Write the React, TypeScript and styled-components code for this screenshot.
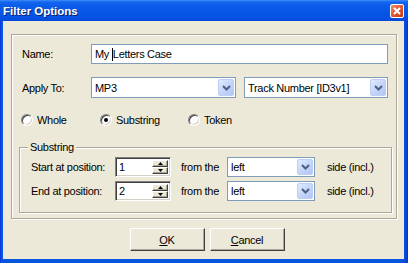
import React from 'react';
import styled, { createGlobalStyle } from 'styled-components';

const Global = createGlobalStyle`
  html, body { margin: 0; padding: 0; background: #fff; }
  body { font-family: "Liberation Sans", Arial, sans-serif; font-size: 11px; color: #000; letter-spacing: -0.3px; }
  * { box-sizing: border-box; }
`;

const Window = styled.div`
  width: 408px;
  height: 263px;
  display: flex;
  flex-direction: column;
  background: linear-gradient(to right, #0831d9 0px, #0b5ae6 2px, #0855dd 4px, #0855dd 403px, #0a4fd8 405px, #0831d9 408px);
  overflow: hidden;
`;

const TitleBar = styled.div`
  height: 21px;
  flex: none;
  display: flex;
  align-items: center;
  justify-content: space-between;
  padding: 0 4px 0 3px;
  background: linear-gradient(to bottom, #3c8ef8 0px, #1566ee 2px, #0a5ce9 6px, #0656e6 12px, #0452e2 18px, #0348d8 21px);
`;

const Title = styled.span`
  font-family: "Liberation Sans", Arial, sans-serif;
  font-weight: bold;
  font-size: 11.5px;
  color: #fff;
  text-shadow: 1px 1px 0 #0a1d6e;
  letter-spacing: 0;
`;

const CloseButton = styled.div`
  width: 14px;
  height: 14px;
  border: 1px solid #fff;
  border-radius: 2px;
  background: linear-gradient(135deg, #f0906f 0%, #e25b35 45%, #c93a12 100%);
  display: flex;
  align-items: center;
  justify-content: center;
`;

const Body = styled.div`
  flex: 1;
  margin: 0 4px 4px 3px;
  background: #ece9d8;
  padding: 13px 0 0 8px;
  display: flex;
  flex-direction: column;
`;

const Frame = styled.div`
  width: 386px;
  height: 185px;
  border: 1px solid #aca899;
  box-shadow: inset 1px 1px 0 #fff, 1px 1px 0 #fff;
  padding: 9px 0 0 0;
  display: flex;
  flex-direction: column;
`;

const Row = styled.div<{ $top?: number; $left?: number; $h?: number }>`
  display: flex;
  align-items: center;
  height: ${(p) => p.$h ?? 20}px;
  margin-top: ${(p) => p.$top ?? 0}px;
  margin-left: ${(p) => p.$left ?? 0}px;
`;

const Label = styled.span<{ $w?: number; $ml?: number }>`
  width: ${(p) => (p.$w ? `${p.$w}px` : 'auto')};
  margin-left: ${(p) => p.$ml ?? 0}px;
  flex: none;
  white-space: nowrap;
`;

const TextBox = styled.div<{ $w: number }>`
  width: ${(p) => p.$w}px;
  height: 20px;
  border: 1px solid #7f9db9;
  background: #fff;
  padding-left: 3px;
  display: flex;
  align-items: center;
  white-space: pre;
`;

const Caret = styled.span`
  display: inline-block;
  width: 1px;
  height: 13px;
  background: #000;
`;

const Combo = styled.div<{ $w: number; $h?: number; $ml?: number }>`
  width: ${(p) => p.$w}px;
  height: ${(p) => p.$h ?? 21}px;
  margin-left: ${(p) => p.$ml ?? 0}px;
  border: 1px solid #7f9db9;
  background: #fff;
  padding: 1px 1px 1px 3px;
  display: flex;
  align-items: center;
  justify-content: space-between;
  white-space: nowrap;
`;

const DropButton = styled.div`
  width: 16px;
  height: 100%;
  border: 1px solid #bccdf6;
  border-radius: 2px;
  background: linear-gradient(135deg, #e2eafd 0%, #c6d6fa 50%, #b2c6f4 100%);
  display: flex;
  align-items: center;
  justify-content: center;
`;

const RadioItem = styled.div<{ $w?: number }>`
  display: flex;
  align-items: center;
  gap: 4px;
  width: ${(p) => (p.$w ? `${p.$w}px` : 'auto')};
`;

const RadioCircle = styled.span<{ $checked?: boolean }>`
  position: relative;
  width: 12px;
  height: 12px;
  border-radius: 50%;
  background: #fff;
  border: 1px solid;
  border-color: #808080 #fff #fff #808080;
  box-shadow: inset 1px 1px 0 #404040, inset -1px -1px 0 #d4d0c8;
  &::after {
    content: '';
    display: ${(p) => (p.$checked ? 'block' : 'none')};
    position: absolute;
    left: 3px;
    top: 3px;
    width: 4px;
    height: 4px;
    border-radius: 50%;
    background: #000;
  }
`;

const GroupBox = styled.div`
  position: relative;
  width: 373px;
  height: 66px;
  margin: 17px 0 0 7px;
  border: 1px solid #aca899;
  box-shadow: inset 1px 1px 0 #fff, 1px 1px 0 #fff;
  padding: 9px 0 0 11px;
  display: flex;
  flex-direction: column;
  gap: 4px;
`;

const Legend = styled.span`
  position: absolute;
  top: -7px;
  left: 8px;
  padding: 0 2px;
  background: #ece9d8;
  line-height: 13px;
`;

const SpinBox = styled.div`
  width: 56px;
  height: 20px;
  border: 1px solid;
  border-color: #808080 #fff #fff #808080;
  box-shadow: inset 1px 1px 0 #404040, inset -1px -1px 0 #d4d0c8;
  background: #fff;
  padding: 2px 2px 2px 3px;
  display: flex;
  align-items: center;
  justify-content: space-between;
`;

const SpinButtons = styled.div`
  width: 16px;
  height: 100%;
  display: flex;
  flex-direction: column;
`;

const SpinHalf = styled.div`
  flex: 1;
  background: #ece9d8;
  border: 1px solid;
  border-color: #fff #404040 #404040 #fff;
  box-shadow: inset -1px -1px 0 #aca899;
  display: flex;
  align-items: center;
  justify-content: center;
`;

const ButtonRow = styled.div`
  display: flex;
  justify-content: center;
  gap: 5px;
  margin-top: 9px;
  padding-right: 1px;
`;

const PushButton = styled.div`
  width: 75px;
  height: 23px;
  background: #ece9d8;
  border: 1px solid;
  border-color: #fff #404040 #404040 #fff;
  box-shadow: inset -1px -1px 0 #aca899;
  display: flex;
  align-items: center;
  justify-content: center;
  u { text-decoration: underline; }
`;

const Chevron = () => (
  <svg width="9" height="6" viewBox="0 0 9 6">
    <path d="M1 1 L4.5 4.5 L8 1" fill="none" stroke="#4d6185" strokeWidth="2" />
  </svg>
);

const Tri = ({ up }: { up?: boolean }) => (
  <svg width="5" height="3" viewBox="0 0 5 3">
    <path d={up ? 'M0 3 L5 3 L2.5 0 Z' : 'M0 0 L5 0 L2.5 3 Z'} fill="#000" />
  </svg>
);

const Spinner = ({ value }: { value: string }) => (
  <SpinBox>
    <span>{value}</span>
    <SpinButtons>
      <SpinHalf><Tri up /></SpinHalf>
      <SpinHalf><Tri /></SpinHalf>
    </SpinButtons>
  </SpinBox>
);

const PositionRow = ({ label, value }: { label: string; value: string }) => (
  <Row>
    <Label $w={84}>{label}</Label>
    <Spinner value={value} />
    <Label $w={46} $ml={10}>from the</Label>
    <Combo $w={88} $h={20}>
      <span>left</span>
      <DropButton><Chevron /></DropButton>
    </Combo>
    <Label $ml={12}>side (incl.)</Label>
  </Row>
);

export default function App() {
  return (
    <>
      <Global />
      <Window>
        <TitleBar>
          <Title>Filter Options</Title>
          <CloseButton>
            <svg width="8" height="8" viewBox="0 0 8 8">
              <path d="M1 1 L7 7 M7 1 L1 7" stroke="#fff" strokeWidth="2" />
            </svg>
          </CloseButton>
        </TitleBar>
        <Body>
          <Frame>
            <Row $left={10}>
              <Label $w={69}>Name:</Label>
              <TextBox $w={297}>
                My <Caret />Letters Case
              </TextBox>
            </Row>
            <Row $left={10} $top={13} $h={21}>
              <Label $w={69}>Apply To:</Label>
              <Combo $w={145}>
                <span>MP3</span>
                <DropButton><Chevron /></DropButton>
              </Combo>
              <Combo $w={144} $ml={8}>
                <span>Track Number [ID3v1]</span>
                <DropButton><Chevron /></DropButton>
              </Combo>
            </Row>
            <Row $left={9} $top={12}>
              <RadioItem $w={79}><RadioCircle />Whole</RadioItem>
              <RadioItem $w={88}><RadioCircle $checked />Substring</RadioItem>
              <RadioItem><RadioCircle />Token</RadioItem>
            </Row>
            <GroupBox>
              <Legend>Substring</Legend>
              <PositionRow label="Start at position:" value="1" />
              <PositionRow label="End at position:" value="2" />
            </GroupBox>
          </Frame>
          <ButtonRow>
            <PushButton><span><u>O</u>K</span></PushButton>
            <PushButton><span><u>C</u>ancel</span></PushButton>
          </ButtonRow>
        </Body>
      </Window>
    </>
  );
}
